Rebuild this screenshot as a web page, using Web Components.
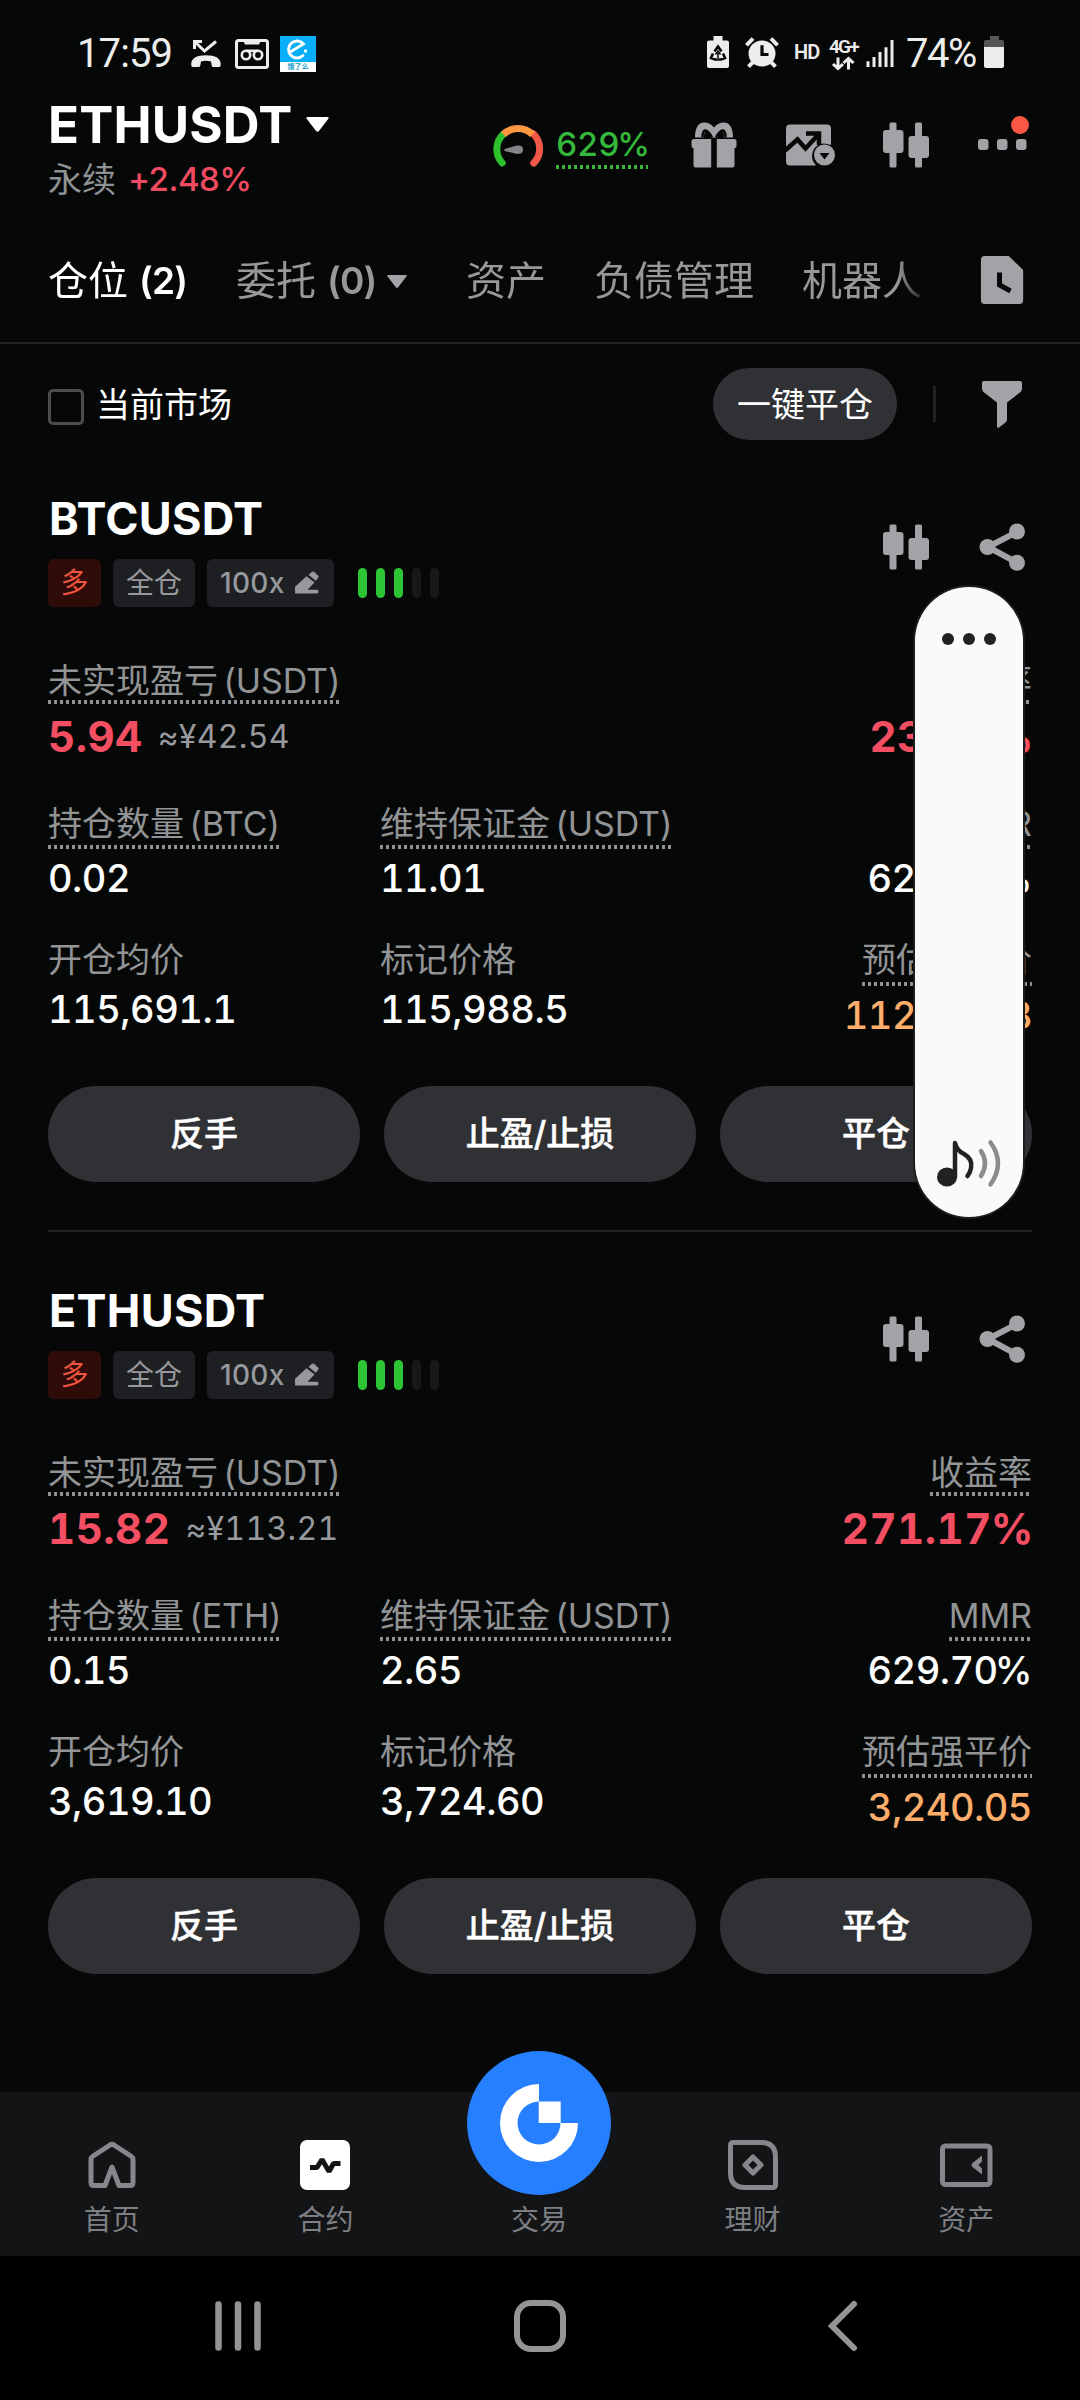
<!DOCTYPE html>
<html lang="zh-CN">
<head>
<meta charset="utf-8">
<title>ETHUSDT</title>
<style>
html,body{margin:0;background:#060807}
body{width:1080px;height:2400px;overflow:hidden;font-family:Inter,"Noto Sans CJK SC",sans-serif;color:#fff;-webkit-font-smoothing:antialiased}
</style>
</head>
<body>
<futures-app></futures-app>
<script>
const define = (name, html, setup) => {
  const tpl = document.createElement('template');
  tpl.innerHTML = html;
  customElements.define(name, class extends HTMLElement {
    connectedCallback() {
      if (this.shadowRoot) return;
      this.attachShadow({mode: 'open'}).appendChild(tpl.content.cloneNode(true));
      if (setup) setup(this, this.shadowRoot);
    }
  });
};

const ICONS = {
  missed: ['0 0 30 30', '<path d="M3.500 10V2.500H11M4 3l9.500 9L25 2.500" fill="none" stroke="currentColor" stroke-width="3"/><path d="M.3 26.500C-.5 19 6 16.300 15 16.300S30.500 19 29.700 26.500q-.2 1.500-1.700 1.500h-5.500q-1.500 0-1.800-1.500l-.7-4q-5-1.500-10 0l-.7 4Q9 28 7.500 28H2Q.5 28 .3 26.500z" fill="currentColor"/>'],
  voicemail: ['0 0 34 30', '<rect x="1.500" y="1.500" width="31" height="27" rx="2" fill="none" stroke="currentColor" stroke-width="3"/><path d="M8 1h18l-2 4.500H10z" fill="currentColor"/><g fill="none" stroke="currentColor" stroke-width="2.600"><circle cx="11" cy="16" r="4.200"/><circle cx="23" cy="16" r="4.200"/><path d="M11 11.800h12"/></g>'],
  saver: ['0 0 22 32', '<path d="M6.500 0h9v4.500H20q2 0 2 2V30q0 2-2 2H2q-2 0-2-2V6.500q0-2 2-2h4.500z" fill="currentColor"/><path d="M7.500 15.500l3.500-5 3.500 5M16 17.500l2 4.500-4 1.500h-2M6 17.500L4 22l4 1.500h2" fill="none" stroke="#060807" stroke-width="2.600"/><path d="M8.500 18.500L11 15l2.500 3.500M11 17v8" stroke="#060807" stroke-width="1.500" fill="none"/>'],
  alarm: ['0 0 34 32', '<circle cx="17" cy="17" r="13.500" fill="currentColor"/><path d="M1.500 8.500L8 1.500M32.500 8.500L26 1.500M8 26l-4.500 4.500M26 26l4.500 4.500" stroke="currentColor" stroke-width="4"/><path d="M17 8.500V18h6.500" fill="none" stroke="#060807" stroke-width="3.200"/>'],
  updown: ['0 0 24 14', '<path d="M7 .5V12M2 7.500l5 5 5-5M17.500 13.500V2M12.500 6.500l5-5 5 5" fill="none" stroke="currentColor" stroke-width="3"/>'],
  signal: ['0 0 28 28', '<path d="M2 28v-6M8 28V17.500M14 28V12.500M20 28V7.500M26 28V0" stroke="currentColor" stroke-width="3"/>'],
  battery: ['0 0 20 32', '<path d="M6 0h9v4h3q2 0 2 2v6H0V6q0-2 2-2h4z" fill="#555756"/><path d="M0 11h20v19q0 2-2 2H2q-2 0-2-2z" fill="currentColor"/>'],
  gauge: ['0 0 48 48', '<g fill="none" stroke-width="7" stroke-linecap="round"><path d="M8.200 42A20.500 20.500 0 0 1 9.500 13" stroke="#2dc02d"/><path d="M39.500 13A20.500 20.500 0 0 1 39.800 42" stroke="#f2584a"/></g><path d="M9.500 13.500A20.500 20.500 0 0 1 38.500 13.500" fill="none" stroke="#ff9840" stroke-width="7"/><path d="M10.500 28L23 24.500Q29 24 29 28.500T23 33L10.500 30z" fill="#85868a"/>'],
  gift: ['0 0 48 48', '<path d="M5 16.500C5 6 9 1.500 14 1.500q6 0 10 5 4-5 10-5c5 0 9 4.500 9 15H34q0-6.500-2-6.500T27 16.500H21Q18 10 16 10t-2 6.500z" fill="currentColor"/><path d="M12.500 16.500q0-6.500 2.500-7 3-.5 7 7M35.500 16.500q0-6.500-2.500-7-3-.5-7 7" fill="none" stroke="#060807" stroke-width="2.500"/><path d="M4 18h17.200v28.500H5.500q-2 0-2-2V27H3q-1.500 0-1.500-2v-5Q1.500 18 4 18zM26.800 18H44q2.500 0 2.500 2v5q0 2-1.500 2h-.5v17.500q0 2-2 2H26.800z" fill="currentColor"/>'],
  chart: ['0 0 48 48', '<path d="M4 3.500h37q4 0 4 4V24Q32 19 27 30q-3 8 3 14.500H4q-4 0-4-4v-33q0-4 4-4z" fill="currentColor"/><path d="M-1 29.500L11.500 18.500l8 9L32 14" fill="none" stroke="#060807" stroke-width="4.500"/><path d="M20 12.500h13V24" fill="none" stroke="#060807" stroke-width="4.500"/><circle cx="38.500" cy="34" r="10.500" fill="currentColor"/><path d="M33.500 32h10l-5 6.500z" fill="#060807"/>'],
  candles: ['0 0 48 48', '<g fill="currentColor"><rect x="7.500" y="1.500" width="7" height="45" rx="1.500"/><rect x="1" y="9" width="20.500" height="23" rx="3"/><rect x="33" y="1.500" width="7" height="45" rx="1.500"/><rect x="26.500" y="15" width="20.500" height="22" rx="3"/></g>'],
  more: ['0 0 48 48', '<g fill="currentColor"><rect y="18" width="10.500" height="11" rx="3"/><rect x="19" y="18" width="10.500" height="11" rx="3"/><rect x="38" y="18" width="10.500" height="11" rx="3"/></g>'],
  history: ['0 0 48 48', '<path d="M6 0h25l15 14v30q0 4-4 4H6q-4 0-4-4V4q0-4 4-4z" fill="currentColor" transform="translate(1 0) scale(.96 1)"/><path d="M21.500 16.500v12.500l11 6" fill="none" stroke="#060807" stroke-width="5"/>'],
  funnel: ['0 0 48 48', '<path d="M6 1h36q2 0 2 2V8.500q0 2-1.500 3.500L29 22.500v17q0 2-1.500 3L21 47.500q-2 1-2-1V22.500L5.500 12Q4 10.500 4 8.500V3q0-2 2-2z" fill="currentColor"/>'],
  share: ['0 0 48 48', '<path d="M39 9L10 24l29 15.500" fill="none" stroke="currentColor" stroke-width="6"/><g fill="currentColor"><circle cx="39" cy="8.500" r="8"/><circle cx="9.500" cy="24" r="8"/><circle cx="39" cy="39.800" r="8"/></g>'],
  pencil: ['0 0 24 24', '<path d="M0 23.500V16.500L11.500 5.500l8 6.500-7 7.500h9.500q1.500 0 1.500 2t-1.500 2z" fill="currentColor"/><path d="M13.500 4L17 .8q1-.8 2 0l4.300 4.200q.8 1 0 2L20.700 10.300z" fill="currentColor"/>'],
  down: ['0 0 24 16', '<path d="M1.500 0h21q2 0 .8 1.800L13.500 15q-1.500 1.500-3 0L.7 1.800Q-.5 0 1.500 0z" fill="currentColor"/>'],
  home: ['0 0 50 50', '<path d="M18 45.500H7q-3 0-3-3V19.500q0-2 1.500-3L23 5q2-1.200 4 0l17.500 11.500q1.500 1 1.500 3v23q0 3-3 3H32L25 27z" fill="none" stroke="currentColor" stroke-width="5" stroke-linejoin="round"/>'],
  contract: ['0 0 50 50', '<rect width="50" height="50" rx="7" fill="#fff"/><path d="M10 27.500h7l5-8 7 12 4.500-8h7" fill="none" stroke="#131416" stroke-width="5" stroke-linejoin="bevel"/>'],
  earn: ['0 0 50 50', '<path d="M5.500 2.500H33Q47.500 2.500 47.500 17v27.500q0 3-3 3H17Q2.500 47.500 2.500 33V5.500q0-3 3-3z" fill="none" stroke="currentColor" stroke-width="5"/><path d="M25 17l8 8-8 8-8-8z" fill="none" stroke="currentColor" stroke-width="5" stroke-linejoin="round"/>'],
  wallet: ['0 0 54 50', '<rect x="3.500" y="6" width="47.500" height="38.500" rx="3" fill="none" stroke="currentColor" stroke-width="5"/><path d="M43 15.500v6L39.500 25l3.500 3.500v6L33.500 27q-2-2 0-4z" fill="currentColor"/>'],
  logo: ['0 0 144 144', '<circle cx="72" cy="72" r="72" fill="#257fff"/><path d="M72 33A39 39 0 1 0 111 72H93.500A21.500 21.500 0 1 1 72 50.500z" fill="#fff"/><path d="M71.700 50.500h22V72h-22z" fill="#fff"/>'],
  recents: ['0 0 52 52', '<path d="M6.500 4.500v43M26 4.500v43M45.500 4.500v43" stroke="currentColor" stroke-width="6.500" stroke-linecap="round"/>'],
  square: ['0 0 52 52', '<rect x="3" y="3" width="46" height="46" rx="14" fill="none" stroke="currentColor" stroke-width="6"/>'],
  back: ['0 0 52 52', '<path d="M26 5L4 27l22 22" fill="none" stroke="currentColor" stroke-width="6" stroke-linecap="round" transform="translate(0 -1)"/>'],
  sound: ['0 0 66 50', '<ellipse cx="10" cy="38" rx="10" ry="9.500" fill="#222"/><path d="M18 38V4q2 8 9 11 9 5 7 14-.5 4-3.500 8" fill="none" stroke="#222" stroke-width="4.500" stroke-linejoin="round" stroke-linecap="round"/><path d="M44 12q8 12 0 25M53.500 3.500q15 20.500 0 42" fill="none" stroke="#8c8c8c" stroke-width="4.500" stroke-linecap="round"/>']
};
define('ui-icon', `<style>:host{display:block;flex:none;width:48px;height:48px}svg{display:block;width:100%;height:100%;overflow:visible}</style><svg></svg>`, (el, root) => {
  const [box, body] = ICONS[el.getAttribute('name')];
  const svg = root.querySelector('svg');
  svg.setAttribute('viewBox', box);
  svg.setAttribute('preserveAspectRatio', 'none');
  svg.innerHTML = body;
});

define('delivery-badge', `<style>
:host{display:flex;flex:none;flex-direction:column;width:36px;height:36px;background:linear-gradient(#08aef8 26px,#fff 26px)}
svg{display:block;width:36px;height:26px}
span{display:block;font-size:7px;line-height:10px;font-weight:700;text-align:center;color:#1a9bd0}
</style><svg viewBox="0 0 36 26"><path d="M11 15.500L23.500 8A8.500 8.500 0 1 0 23 19.500" fill="none" stroke="#fff" stroke-width="2.800" stroke-linecap="round"/><circle cx="25.500" cy="15" r="1.700" fill="#fff"/></svg><span>饿了么</span>`);

define('status-bar', `<style>
:host{display:flex;justify-content:space-between;align-items:center;height:87px;padding:10px 76px 0 77px;margin-bottom:-1px;font-family:Roboto,"Noto Sans CJK SC",sans-serif;color:#ededed;font-size:40px;line-height:48px}
.g{display:flex;align-items:center}
.time{width:114px;letter-spacing:-.9px}
.missed{width:30px;height:30px;margin-right:14px}
.vm{width:34px;height:30px;margin-right:11px}
.sv{width:22px;height:32px;margin-top:-3px}
.al{width:34px;height:31px;margin:-3px 0 0 16px}
.hd{font-size:20px;font-weight:600;line-height:24px;margin:-3px 0 0 15px;width:35px;letter-spacing:-.8px}
.net{display:flex;flex-direction:column;align-items:flex-start;width:37px}
.net span{font-size:19px;line-height:18px;font-weight:600;letter-spacing:-1.800px}
.net ui-icon{width:24px;height:13px;margin:1px 0 0 2px}
.sig{width:28px;height:27px;margin-right:12px}
.pct{width:78px;letter-spacing:-1.500px}
.bat{width:20px;height:32px;margin-top:-3px}
</style>
<div class="g"><span class="time">17:59</span><ui-icon class="missed" name="missed"></ui-icon><ui-icon class="vm" name="voicemail"></ui-icon><delivery-badge></delivery-badge></div>
<div class="g"><ui-icon class="sv" name="saver"></ui-icon><ui-icon class="al" name="alarm"></ui-icon><span class="hd">HD</span><div class="net"><span>4G+</span><ui-icon name="updown"></ui-icon></div><ui-icon class="sig" name="signal"></ui-icon><span class="pct">74%</span><ui-icon class="bat" name="battery"></ui-icon></div>`);

define('market-header', `<style>
:host{display:flex;justify-content:space-between;height:122px;padding:0 54px 0 48px;color:#a2a3a6}
.t{display:flex;align-items:center;font-size:51px;line-height:57px;font-weight:700;color:#fff;letter-spacing:.2px}
.t ui-icon{width:23px;height:15px;margin-left:13px}
.s{display:flex;gap:13px;margin-top:4px;font-size:34px;line-height:45px;color:#8f9193}
.s b{font-size:33px;font-weight:500;color:#f04b60;letter-spacing:-.5px;margin-left:-1px}
.r{display:flex;align-items:center;gap:48px;height:97px}
.m{display:flex;align-items:center;gap:14px;margin-right:-6px}
.m div{width:92px;height:46px;margin-top:3px;line-height:42px;font-size:33px;font-weight:450;color:#35b83c;letter-spacing:-.3px;font-feature-settings:"tnum";background:repeating-linear-gradient(90deg,#35b83c 0 3px,transparent 3px 6px) left bottom/100% 4px no-repeat}
.m i{font-style:normal;margin-left:-2px}
.n{position:relative}
.n i{position:absolute;width:18px;height:18px;border-radius:50%;background:#fa5844;right:-3px;top:-5px}
</style>
<div><div class="t">ETHUSDT<ui-icon name="down"></ui-icon></div><div class="s"><span>永续</span><b>+2.48%</b></div></div>
<div class="r"><div class="m"><ui-icon name="gauge"></ui-icon><div>629<i>%</i></div></div><ui-icon name="gift"></ui-icon><ui-icon name="chart"></ui-icon><ui-icon name="candles"></ui-icon><div class="n"><ui-icon name="more"></ui-icon><i></i></div></div>`);

define('tab-bar', `<style>
:host{display:flex;align-items:center;justify-content:space-between;height:124px;border-bottom:2px solid #222324;padding:0 54px 0 48px;color:#96989a}
nav{display:flex;gap:48px;width:884px;margin-top:1px;overflow:hidden;white-space:nowrap;-webkit-mask:linear-gradient(90deg,#000 850px,transparent 880px);mask:linear-gradient(90deg,#000 850px,transparent 880px)}
ui-icon{color:#a2a3a6}
</style><nav><slot></slot></nav><ui-icon name="history"></ui-icon>`);
define('tab-item', `<style>
:host{display:flex;align-items:center;font-size:40px;line-height:56px}
:host([active]){color:#fff}
span{width:49px;margin-left:11px;font-size:37px;font-weight:600;letter-spacing:-.8px}
ui-icon{width:20px;height:13px;margin:2px 11px 0;color:#a2a3a6}
</style><slot></slot>`, (el, root) => {
  if (el.hasAttribute('count')) { const s = document.createElement('span'); s.textContent = `(${el.getAttribute('count')})`; root.append(s); }
  if (el.hasAttribute('menu')) { const i = document.createElement('ui-icon'); i.setAttribute('name', 'down'); root.append(i); }
});

define('filter-row', `<style>
:host{display:flex;align-items:center;height:120px;padding:0 54px 0 48px;font-size:34px}
.c{box-sizing:border-box;width:36px;height:36px;border:3px solid #4b4c4e;border-radius:5px;margin:6px 12px 0 0}
.l{flex:1;line-height:48px;margin-top:1px}
.p{width:184px;height:72px;border-radius:36px;background:#303134;line-height:73px;text-align:center}
.v{width:3px;height:36px;background:#222325;margin:0 42px 0 36px}
ui-icon{color:#a2a3a6}
</style><div class="c"></div><span class="l">当前市场</span><div class="p">一键平仓</div><div class="v"></div><ui-icon name="funnel"></ui-icon>`);

define('metric-cell', `<style>
:host{display:flex;flex-direction:column;align-items:flex-start;color:#fff}
:host([end]){align-items:flex-end}
.l{font-size:34px;line-height:43px;height:42px;color:#929496;white-space:nowrap}
.l ::slotted(*){letter-spacing:-.1px;word-spacing:-4px}
:host([dots]) .l{height:var(--h,47px);background:repeating-linear-gradient(90deg,#909294 0 3px,transparent 3px 6px) left bottom/100% 4px no-repeat}
.v{display:flex;align-items:center;margin-top:5px;font-size:38px;line-height:48px;height:47px;font-weight:530;font-feature-settings:"tnum";letter-spacing:-.5px}
:host([big]) .v{margin-top:8px;font-size:42px;line-height:50px;height:50px;font-weight:700;color:#f34e62;letter-spacing:.5px}
:host([warn]) .v{color:#ffad6a}
i{font-style:normal;margin-left:-3px}
:host([big]) i{margin:0 -2px 0 -1px}
small{font-size:32px;font-weight:400;color:#98999c;margin-left:15px;letter-spacing:.3px}
</style><div class="l"><slot></slot></div><div class="v"></div>`, (el, root) => {
  const v = root.querySelector('.v'), val = el.getAttribute('value');
  v.textContent = val.replace('%', '');
  if (val.endsWith('%')) { const p = document.createElement('i'); p.textContent = '%'; v.append(p); }
  if (el.hasAttribute('approx')) { const s = document.createElement('small'); s.textContent = el.getAttribute('approx'); v.append(s); }
});

define('pill-button', `<style>:host{display:block;flex:1;height:96px;border-radius:48px;background:#303134;text-align:center;line-height:96px;font-size:34px;font-weight:500;-webkit-text-stroke:.5px #fff}</style><slot></slot>`);

define('position-card', `<style>
:host{display:block;box-sizing:border-box;height:792px;padding:26px 48px 0}
.head{display:flex;justify-content:space-between;align-items:center;height:117px}
.t{font-size:45px;line-height:57px;font-weight:650;letter-spacing:.25px;padding-left:1px}
.tags{display:flex;align-items:center;gap:12px;margin-top:12px;height:48px;font-size:28px;line-height:48px;color:#96989b}
.tags>span{display:flex;align-items:center;height:48px;border-radius:6px;background:#1e1f23}
.tags>.long{width:53px;justify-content:center;background:#2f0c08;color:#ef543e}
.mode{width:82px;justify-content:center}
.lev{width:114px;padding-left:13px;font-weight:500;letter-spacing:.3px}
.lev ui-icon{width:24px;height:23px;margin-left:10px;margin-top:-2px}
.bars{display:flex;gap:9px;margin-left:12px}
.bars i{width:9px;height:30px;border-radius:5px;background:#2dc436}
.bars i:nth-child(n+4){background:#17181a}
.tools{display:flex;gap:48px;padding-right:6px;color:#a2a3a6;margin-top:-3px}
.row{display:grid;grid-template-columns:332px 1fr auto}
.r1{margin-top:52px;--h:45px}
.r2{margin-top:40px}.r3{margin-top:37px;--h:48px;height:101px}
.btns{display:flex;gap:24px;margin-top:47px}
hr{border:0;height:2px;background:#202123;margin:48px 0 0}
:host([last]) hr{display:none}
</style>
<div class="head"><div><div class="t"></div><div class="tags"><span class="long">多</span><span class="mode">全仓</span><span class="lev">100x<ui-icon name="pencil"></ui-icon></span><div class="bars"><i></i><i></i><i></i><i></i><i></i></div></div></div>
<div class="tools"><ui-icon name="candles"></ui-icon><ui-icon name="share"></ui-icon></div></div>
<div class="body"></div>
<div class="btns"><pill-button>反手</pill-button><pill-button>止盈/止损</pill-button><pill-button>平仓</pill-button></div><hr>`, (el, root) => {
  const a = n => el.getAttribute(n);
  root.querySelector('.t').textContent = a('symbol');
  root.querySelector('.body').innerHTML = `
  <div class="row r1"><metric-cell dots big value="${a('pnl')}" approx="${a('cny')}">未实现盈亏<span> (USDT)</span></metric-cell><b></b><metric-cell end dots big value="${a('roi')}">收益率</metric-cell></div>
  <div class="row r2"><metric-cell dots value="${a('size')}">持仓数量<span> (${a('coin')})</span></metric-cell><metric-cell dots value="${a('margin')}">维持保证金<span> (USDT)</span></metric-cell><metric-cell end dots value="${a('mmr')}">MMR</metric-cell></div>
  <div class="row r3"><metric-cell value="${a('entry')}">开仓均价</metric-cell><metric-cell value="${a('mark')}">标记价格</metric-cell><metric-cell end dots warn value="${a('liq')}">预估强平价</metric-cell></div>`;
});

define('volume-panel', `<style>
:host{position:absolute;left:915px;top:587px;width:108px;height:630px;border-radius:54px;background:#fafafa;box-shadow:0 0 0 2px #1c1d1d;display:flex;flex-direction:column;justify-content:space-between;align-items:center;box-sizing:border-box;padding:46px 0 28px}
div{display:flex;gap:9px}
i{width:12px;height:12px;border-radius:50%;background:#222}
ui-icon{width:66px;height:50px;margin-left:2px}
</style><div><i></i><i></i><i></i></div><ui-icon name="sound"></ui-icon>`);

define('nav-item', `<style>
:host{flex:1;display:flex;flex-direction:column;align-items:center;justify-content:flex-end;color:#85878a}
ui-icon{width:50px;height:50px;margin-bottom:12px}
:host([icon=wallet]) ui-icon{width:54px}
:host([icon=logo]) ui-icon{width:144px;height:144px;margin-bottom:7px}
span{font-size:28px;line-height:36px;color:#7d7f82}
</style><span><slot></slot></span>`, (el, root) => {
  const i = document.createElement('ui-icon');
  i.setAttribute('name', el.getAttribute('icon'));
  root.querySelector('span').before(i);
});
define('bottom-nav', `<style>:host{display:flex;box-sizing:border-box;height:164px;padding:0 7px 18px 5px;background:#131416}</style>
<nav-item icon="home">首页</nav-item><nav-item icon="contract">合约</nav-item><nav-item icon="logo">交易</nav-item><nav-item icon="earn">理财</nav-item><nav-item icon="wallet">资产</nav-item>`);
define('system-nav', `<style>:host{display:flex;box-sizing:border-box;height:144px;padding:44px 0 0 212px;background:#000;color:#949494}ui-icon{width:52px;height:52px;margin-right:250px}ui-icon+ui-icon{margin-right:262px}ui-icon:last-child{margin-right:0}</style>
<ui-icon name="recents"></ui-icon><ui-icon name="square"></ui-icon><ui-icon name="back"></ui-icon>`);

define('futures-app', `<style>
:host{display:flex;flex-direction:column;position:relative;width:1080px;height:2400px;background:#060807}
main{flex:1;min-height:0}
bottom-nav,system-nav{flex:none}
</style>
<status-bar></status-bar><market-header></market-header>
<tab-bar><tab-item active count="2">仓位</tab-item><tab-item count="0" menu>委托</tab-item><tab-item>资产</tab-item><tab-item>负债管理</tab-item><tab-item>机器人</tab-item></tab-bar>
<filter-row></filter-row>
<main>
<position-card symbol="BTCUSDT" coin="BTC" pnl="5.94" cny="≈¥42.54" roi="23.74%" size="0.02" margin="11.01" mmr="629.70%" entry="115,691.1" mark="115,988.5" liq="112,869.8"></position-card>
<position-card last symbol="ETHUSDT" coin="ETH" pnl="15.82" cny="≈¥113.21" roi="271.17%" size="0.15" margin="2.65" mmr="629.70%" entry="3,619.10" mark="3,724.60" liq="3,240.05"></position-card>
</main>
<volume-panel></volume-panel>
<bottom-nav></bottom-nav><system-nav></system-nav>`);
</script>
</body>
</html>
